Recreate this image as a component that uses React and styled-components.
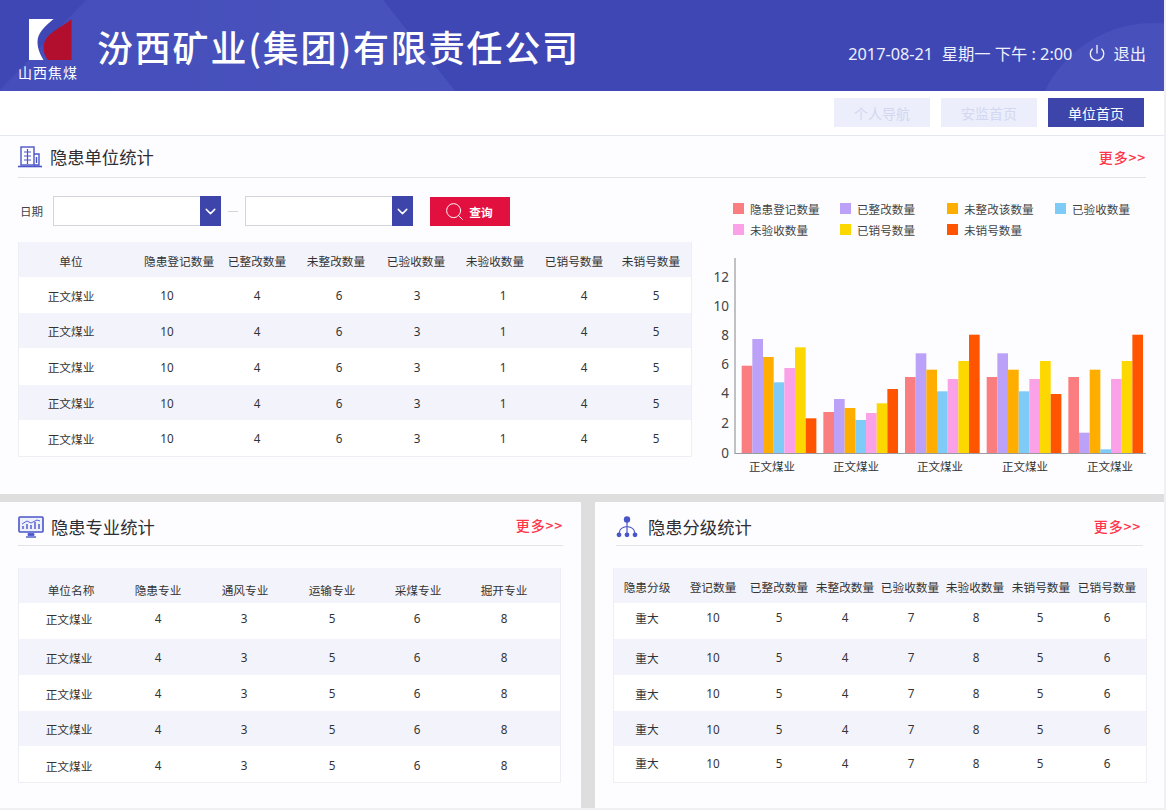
import React from 'react';
import styled, { createGlobalStyle } from 'styled-components';
import { ChevronDown, Power, Search } from 'lucide-react';

const GlobalStyle = createGlobalStyle`
  html, body {
    margin: 0;
    padding: 0;
    background: #f0f0f3;
  }
  body {
    font-family: "Noto Sans CJK SC", "Noto Sans", sans-serif;
    color: #333;
  }
`;

const Page = styled.div`
  width: 1164px;
  height: 808px;
  overflow: hidden;
  display: flex;
  flex-direction: column;
  background: #fdfdff;
`;

const Header = styled.header`
  position: relative;
  flex: none;
  height: 91px;
  display: flex;
  align-items: center;
  padding: 0 18px 0 18px;
  box-sizing: border-box;
  overflow: hidden;
  background: #3f47b5;
  color: #fff;

  &::before {
    content: '';
    position: absolute;
    inset: 0;
    background: linear-gradient(90deg, #454eba 0%, #4a54be 55%, #434bb8 100%);
    clip-path: polygon(0 90px, 86px 0, 383px 0, 455px 91px, 0 91px);
  }

  &::after {
    content: '';
    position: absolute;
    left: 1033px;
    top: 23px;
    width: 240px;
    height: 240px;
    border-radius: 50%;
    background: #4850bb;
  }

  > * {
    position: relative;
    z-index: 1;
  }
`;

const LogoBlock = styled.div`
  width: 60px;
  display: flex;
  flex-direction: column;
  align-items: center;
  margin-top: 7px;
`;

const LogoSvg = styled.svg`
  margin-left: 4px;
`;

const LogoText = styled.span`
  font-size: 14px;
  line-height: 16px;
  margin-top: 4px;
  letter-spacing: 1px;
  white-space: nowrap;
`;

const CompanyName = styled.h1`
  margin: 0 0 0 19px;
  font-size: 36px;
  font-weight: 500;
  letter-spacing: 1.8px;
  line-height: 42px;
  white-space: nowrap;
`;

const HeaderRight = styled.div`
  margin-left: auto;
  display: flex;
  align-items: center;
  font-family: "Noto Sans", "Noto Sans CJK SC", sans-serif;
  font-size: 16.3px;
  color: #eef0fb;
  margin-top: 14px;
`;

const Clock = styled.span`
  white-space: pre;
`;

const Logout = styled.span`
  display: flex;
  align-items: center;
  gap: 7px;
  margin-left: 16px;
`;

const SubNav = styled.nav`
  flex: none;
  height: 45px;
  display: flex;
  justify-content: flex-end;
  align-items: flex-start;
  gap: 11px;
  padding: 7px 20px 0 0;
  box-sizing: border-box;
  border-bottom: 1px solid #e6e8f0;
  background: #fff;
`;

const NavButton = styled.button`
  width: 96px;
  height: 29px;
  border: 0;
  padding: 0;
  font: inherit;
  font-size: 14px;
  background: ${p => (p.$active ? '#3d45ab' : '#eceefb')};
  color: ${p => (p.$active ? '#fff' : '#d3d7f1')};
`;

const TopSection = styled.section`
  flex: none;
  height: 358px;
  padding: 0 18px 0 18px;
  box-sizing: border-box;
`;

const SectionHead = styled.div`
  height: 42px;
  display: flex;
  align-items: center;
  gap: ${p => p.$gap || 8}px;
  box-sizing: border-box;
  border-bottom: 1px solid #e3e4ea;
`;

const PanelHead = styled(SectionHead)`
  height: 44px;
  margin: ${p => p.$margin};
  padding: 6px ${p => p.$right}px 0 0;
`;

const HeadTitle = styled.h2`
  margin: 0;
  flex: 1;
  font-size: 17.3px;
  font-weight: 400;
  color: #2e2e33;
  white-space: nowrap;
`;

const MoreLink = styled.a`
  font-size: 14px;
  font-weight: 500;
  color: #ff3548;
  letter-spacing: 0.8px;
  white-space: nowrap;
  margin-bottom: ${p => p.$lift || 0}px;
`;

const TopBody = styled.div`
  display: flex;
`;

const LeftCol = styled.div`
  width: 674px;
  flex: none;
`;

const FilterBar = styled.div`
  margin-top: 18px;
  height: 30px;
  display: flex;
  align-items: center;
`;

const FilterLabel = styled.span`
  width: 35px;
  padding-left: 2px;
  box-sizing: border-box;
  font-size: 11.5px;
  color: #444;
`;

const DateSelect = styled.div`
  width: 168px;
  height: 30px;
  box-sizing: border-box;
  display: flex;
  justify-content: flex-end;
  background: #fff;
  border: 1px solid #d4d5da;
  border-right: 0;
`;

const SelectArrow = styled.span`
  width: 21px;
  margin: -1px 0;
  display: flex;
  align-items: center;
  justify-content: center;
  background: #3d45ab;
  color: #fff;
`;

const Dash = styled.span`
  width: 24px;
  display: flex;
  justify-content: center;

  &::before {
    content: '';
    width: 10px;
    height: 1px;
    background: #d5d5d8;
  }
`;

const QueryButton = styled.button`
  width: 80px;
  height: 29px;
  margin-left: 17px;
  border: 0;
  padding: 0 3px 0 0;
  display: flex;
  align-items: center;
  justify-content: center;
  gap: 4px;
  font: inherit;
  font-size: 11.7px;
  font-weight: 700;
  background: #e2103f;
  color: #fff;
`;

const TableBox = styled.div`
  margin-top: ${p => p.$top}px;
  border: 1px solid #eeeff4;
  border-top: 0;
  box-sizing: border-box;
`;

const Row = styled.div`
  display: grid;
  height: ${p => p.$h}px;
  align-items: center;
  padding-left: ${p => p.$pad}px;
  grid-template-columns: ${p => p.$cols};
  background: ${p => (p.$tint ? '#f3f4fb' : '#fff')};
  font-size: 11.7px;
  color: #333;
`;

// zero width cell so the text centres on its column line
const Cell = styled.div`
  width: 0;
  display: flex;
  justify-content: center;
  white-space: nowrap;
  padding-top: ${p => Math.max(p.$drop || 0, 0)}px;
  padding-bottom: ${p => Math.max(-(p.$drop || 0), 0)}px;
  font-family: ${p => (p.$num ? '"Noto Sans", sans-serif' : 'inherit')};
`;

const ChartCol = styled.div`
  flex: 1;
  margin-left: 8px;
`;

const Legend = styled.div`
  margin: 20px 0 1px;
  padding-left: 33px;
  display: grid;
  grid-template-columns: 107px 107px 108px 1fr;
  grid-auto-rows: 21px;
`;

const LegendItem = styled.div`
  display: flex;
  align-items: center;
  gap: 6px;
  font-size: 11.6px;
  color: #444;
  white-space: nowrap;
`;

const Swatch = styled.i`
  width: 11px;
  height: 11px;
  background: ${p => p.$color};
`;

const ChartSvg = styled.svg`
  display: block;
`;

const Band = styled.div`
  flex: none;
  height: 8px;
  background: #dedede;
`;

const BottomRow = styled.div`
  flex: 1;
  display: flex;
`;

const Panel = styled.section`
  width: ${p => p.$w}px;
  flex: none;
  box-sizing: border-box;
  padding: ${p => p.$padding};
`;

const Gutter = styled.div`
  width: 14px;
  flex: none;
  background: #dedede;
`;

// left is the table's outer edge, so take off its 1px border
const axes = (centers, left) => ({
  pad: centers[0] - left - 1,
  cols: centers.slice(1).map((c, i) => `${c - centers[i]}px`).concat('1fr').join(' '),
});

const BuildingIcon = () => (
  <svg width="24" height="22" viewBox="0 0 24 22" fill="none" stroke="#4a55c8" strokeWidth="1.4">
    <rect x="3" y="1" width="13" height="18" />
    <path d="M6 6h7M6 10h7M6 14h7M9.500 3v15" strokeWidth="1.2" />
    <path d="M16 8h5v11h-5M18.500 11v6" />
    <path d="M0 20.500h24" strokeWidth="1.6" />
  </svg>
);

const MonitorIcon = () => (
  <svg width="26" height="22" viewBox="0 0 26 22" fill="none" stroke="#4a55c8">
    <rect x="1" y="1" width="24" height="15" rx="1" strokeWidth="1.6" fill="#eef0fb" />
    <path d="M5 13V10M9 13V8M13 13V9M17 13V6M21 13V8" strokeWidth="1.4" />
    <path d="M4 8l5-3 4 2 6-3 3 1" strokeWidth="0.9" />
    <path d="M10 17.500h6v2h-6z" fill="#4a55c8" strokeWidth="0.8" />
    <path d="M8 21h10" strokeWidth="1.4" />
  </svg>
);

const LevelIcon = () => (
  <svg width="22" height="22" viewBox="0 0 22 22" fill="#4a55c8" stroke="#4a55c8">
    <path d="M11 6v12M11 10.500C6 11 3.500 13 3.200 17M11 10.500c5 .5 7.500 2.500 7.800 6.500" fill="none" strokeWidth="1.2" />
    <circle cx="11" cy="3.500" r="3.200" stroke="none" />
    <circle cx="3" cy="18.800" r="2.400" stroke="none" />
    <circle cx="11" cy="18.800" r="2.400" stroke="none" />
    <circle cx="19" cy="18.800" r="2.400" stroke="none" />
  </svg>
);

const LogoMark = () => (
  <LogoSvg width="43" height="41" viewBox="0 0 43 41">
    <path d="M0 0h24.500C15 8 8.500 14 8.500 23c0 7 3 13 6 18H0z" fill="#fff" />
    <path d="M42.500 0v41H19C14.500 35 13.500 29 15.500 23 19 13 32 9 42.500 0z" fill="#b20f2e" />
  </LogoSvg>
);

const legend = [
  ['隐患登记数量', '#fa7d7f'],
  ['已整改数量', '#bba1f7'],
  ['未整改该数量', '#ffae00'],
  ['已验收数量', '#7ecbf8'],
  ['未验收数量', '#fba1e8'],
  ['已销号数量', '#fcd800'],
  ['未销号数量', '#ff5500'],
];

// bar tops in page pixels, one list per group
const barTops = [
  [365.7, 339, 357, 382.3, 368, 347.3, 418.3],
  [412, 399, 408, 420, 413, 403.3, 389],
  [377, 353.3, 369.7, 391.3, 379, 361, 334.7],
  [377, 353.3, 369.7, 391.3, 379, 361, 394],
  [377, 432.7, 369.7, 449.3, 379, 361, 334.7],
];

const ticks = [[0, 453], [2, 423], [4, 393], [6, 364], [8, 335], [10, 306], [12, 277]];
const groupLabels = [772, 856, 940, 1025, 1110];

const BarChart = () => (
  <ChartSvg width="446" height="240" viewBox="700 241 446 240">
    {barTops.map((tops, g) =>
      tops.map((top, i) => (
        <rect
          key={`${g}-${i}`}
          x={741.67 + 81.67 * g + 10.67 * i}
          y={top}
          width="10.67"
          height={453.3 - top}
          fill={legend[i][1]}
        />
      ))
    )}
    <path d="M735 258V453.500H1146" fill="none" stroke="#9a9a9f" strokeWidth="1.2" />
    {ticks.map(([v, y]) => (
      <text key={v} x="729" y={y + 5} textAnchor="end" fontSize="13.500" fill="#444" fontFamily="Noto Sans, sans-serif">
        {v}
      </text>
    ))}
    {groupLabels.map(x => (
      <text key={x} x={x} y="471" textAnchor="middle" fontSize="11.500" fill="#333" fontFamily="Noto Sans CJK SC, sans-serif">
        正文煤业
      </text>
    ))}
  </ChartSvg>
);

const StatTable = ({ top, left, head, headAt, headH, headDrop, rows, bodyAt, heights, drops = [] }) => {
  const h = axes(headAt, left);
  const b = axes(bodyAt, left);
  return (
    <TableBox $top={top}>
      <Row $h={headH} $tint $pad={h.pad} $cols={h.cols}>
        {head.map(t => (
          <Cell key={t} $drop={headDrop}>{t}</Cell>
        ))}
      </Row>
      {heights.map((rh, r) => (
        <Row key={r} $h={rh} $tint={r % 2 === 1} $pad={b.pad} $cols={b.cols}>
          {rows.map((v, c) => (
            <Cell key={c} $num={c > 0} $drop={drops[r]}>{v}</Cell>
          ))}
        </Row>
      ))}
    </TableBox>
  );
};

export default function App() {
  return (
    <Page>
      <GlobalStyle />
      <Header>
        <LogoBlock>
          <LogoMark />
          <LogoText>山西焦煤</LogoText>
        </LogoBlock>
        <CompanyName>汾西矿业(集团)有限责任公司</CompanyName>
        <HeaderRight>
          <Clock>2017-08-21  星期一 下午 : 2:00</Clock>
          <Logout>
            <Power size={18} strokeWidth={1.8} />
            退出
          </Logout>
        </HeaderRight>
      </Header>

      <SubNav>
        <NavButton>个人导航</NavButton>
        <NavButton>安监首页</NavButton>
        <NavButton $active>单位首页</NavButton>
      </SubNav>

      <TopSection>
        <SectionHead $gap={8}>
          <BuildingIcon />
          <HeadTitle>隐患单位统计</HeadTitle>
          <MoreLink>更多&gt;&gt;</MoreLink>
        </SectionHead>
        <TopBody>
          <LeftCol>
            <FilterBar>
              <FilterLabel>日期</FilterLabel>
              <DateSelect>
                <SelectArrow><ChevronDown size={17} strokeWidth={2} /></SelectArrow>
              </DateSelect>
              <Dash />
              <DateSelect>
                <SelectArrow><ChevronDown size={17} strokeWidth={2} /></SelectArrow>
              </DateSelect>
              <QueryButton>
                <Search size={21} strokeWidth={1.1} />
                查询
              </QueryButton>
            </FilterBar>
            <StatTable
              top={16}
              left={18}
              head={['单位', '隐患登记数量', '已整改数量', '未整改数量', '已验收数量', '未验收数量', '已销号数量', '未销号数量']}
              headAt={[71, 179, 257, 336, 416, 495, 574, 651]}
              headH={35}
              headDrop={2}
              rows={['正文煤业', 10, 4, 6, 3, 1, 4, 5]}
              bodyAt={[71, 167, 257, 339, 417, 503, 584, 656]}
              heights={[36, 35, 37, 35, 36]}
            />
          </LeftCol>
          <ChartCol>
            <Legend>
              {legend.map(([name, color]) => (
                <LegendItem key={name}>
                  <Swatch $color={color} />
                  {name}
                </LegendItem>
              ))}
            </Legend>
            <BarChart />
          </ChartCol>
        </TopBody>
      </TopSection>

      <Band />

      <BottomRow>
        <Panel $w={581} $padding="0 20px 0 18px">
          <PanelHead $gap={7} $margin="0 -2px 0 0" $right={0}>
            <MonitorIcon />
            <HeadTitle>隐患专业统计</HeadTitle>
            <MoreLink $lift={4}>更多&gt;&gt;</MoreLink>
          </PanelHead>
          <StatTable
            top={22}
            left={18}
            head={['单位名称', '隐患专业', '通风专业', '运输专业', '采煤专业', '掘开专业']}
            headAt={[71, 158, 245, 332, 418, 504]}
            headH={35}
            headDrop={8}
            rows={['正文煤业', 4, 3, 5, 6, 8]}
            bodyAt={[69, 158, 244, 332, 417, 504]}
            heights={[36, 36, 36, 35, 36]}
            drops={[-6, 0, 0, 0, 2]}
          />
        </Panel>
        <Gutter />
        <Panel $w={569} $padding="0 17px 0 18px">
          <PanelHead $gap={10} $margin="0 4px 0 3px" $right={2}>
            <LevelIcon />
            <HeadTitle>隐患分级统计</HeadTitle>
            <MoreLink $lift={2}>更多&gt;&gt;</MoreLink>
          </PanelHead>
          <StatTable
            top={22}
            left={613}
            head={['隐患分级', '登记数量', '已整改数量', '未整改数量', '已验收数量', '未验收数量', '未销号数量', '已销号数量']}
            headAt={[647, 713, 779, 845, 910, 975, 1041, 1107]}
            headH={35}
            headDrop={2}
            rows={['重大', 10, 5, 4, 7, 8, 5, 6]}
            bodyAt={[647, 713, 779, 845, 911, 976, 1040, 1107]}
            heights={[36, 36, 36, 35, 36]}
            drops={[-8, 0, 0, 0, -3]}
          />
        </Panel>
      </BottomRow>
    </Page>
  );
}
